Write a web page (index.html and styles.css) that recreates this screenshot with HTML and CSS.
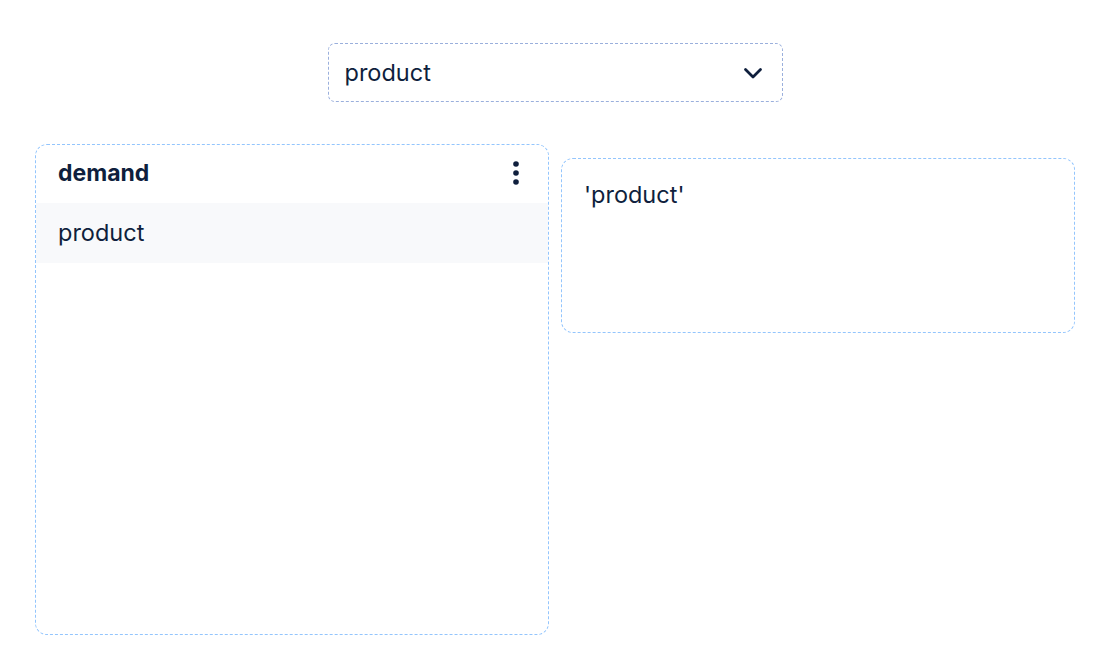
FILE: index.html
```html
<!DOCTYPE html>
<html lang="en">
<head>
    <meta charset="UTF-8">
    <title>Demand</title>
    <link rel="stylesheet" href="styles.css">
</head>
<body>
    <div class="page">
        <div class="picker">
            <div class="select">
                <span>product</span>
                <svg class="chevron" width="22" height="22" viewBox="0 0 22 22">
                    <path d="M3.5 7.5l7.5 7.5 7.5-7.5" fill="none" stroke="#0f1f3d" stroke-width="2.8" stroke-linecap="round" stroke-linejoin="round"/>
                </svg>
            </div>
        </div>
        <div class="panels">
            <div class="card list-card">
                <div class="card-header">
                    <span class="title">demand</span>
                    <svg class="kebab" width="8" height="26" viewBox="0 0 8 26">
                        <circle cx="4" cy="4" r="2.8" fill="#0f1f3d"/>
                        <circle cx="4" cy="13" r="2.8" fill="#0f1f3d"/>
                        <circle cx="4" cy="22" r="2.8" fill="#0f1f3d"/>
                    </svg>
                </div>
                <div class="list-item">product</div>
            </div>
            <div class="card value-card">
                <div class="value">'product'</div>
            </div>
        </div>
    </div>
</body>
</html>
```

FILE: styles.css
```css
body {
    margin: 0;
    font-family: Inter, "Noto Sans", sans-serif;
    color: #0f1f3d;
    background: #fff;
}
.page {
    padding: 43px 43px 0 35px;
}
.picker {
    display: flex;
    justify-content: center;
}
.select {
    width: 455px;
    height: 59px;
    box-sizing: border-box;
    display: flex;
    align-items: center;
    justify-content: space-between;
    padding: 0 18px 0 16px;
    border: 1px dashed #9aafdc;
    border-radius: 7px;
    font-size: 23.5px;
}
.panels {
    display: grid;
    grid-template-columns: 1fr 1fr;
    gap: 12px;
    margin-top: 42px;
    align-items: start;
}
.card {
    box-sizing: border-box;
    border: 1px dashed #93c5fd;
    border-radius: 12px;
    overflow: hidden;
}
.list-card {
    height: 491px;
}
.card-header {
    box-sizing: border-box;
    height: 58px;
    display: flex;
    align-items: center;
    justify-content: space-between;
    padding: 0 28px 2px 22px;
}
.title {
    font-size: 23px;
    font-weight: 700;
}
.list-item {
    box-sizing: border-box;
    height: 60px;
    display: flex;
    align-items: center;
    padding: 0 22px 2px;
    background: #f8f9fb;
    font-size: 23.5px;
}
.value-card {
    margin-top: 14px;
    height: 175px;
    padding: 21px 22px;
}
.value {
    font-size: 23.5px;
}
```
